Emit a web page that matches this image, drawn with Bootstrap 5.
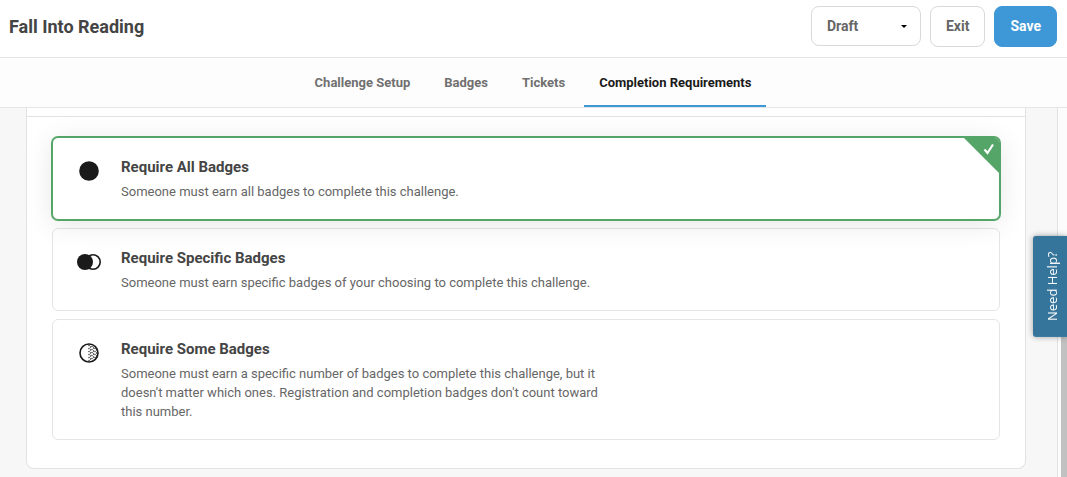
<!DOCTYPE html>
<html lang="en">
<head>
<meta charset="utf-8">
<meta name="viewport" content="width=device-width, initial-scale=1">
<title>Fall Into Reading</title>
<link href="https://cdn.jsdelivr.net/npm/bootstrap@5.3.0/dist/css/bootstrap.min.css" rel="stylesheet">
<style>
  body { font-family: Roboto, "Liberation Sans", sans-serif; font-size: 13px; line-height: 19px; color: #666; background: #f7f7f7; }
  .topbar { padding: 6px 10px 10px 9px; border-bottom: 1px solid #e5e5e5; }
  .topbar h1 { font-size: 18px; line-height: 24px; font-weight: 700; color: #444; }
  .controls { gap: 9px; }
  .ctl { font-size: 14px; line-height: 19px; font-weight: 700; padding: 10px 15px; border: 1px solid #d9d9d9; border-radius: 8px; color: #666; background-color: #fff; }
  .ctl-save { background-color: #3e97d6; border-color: #3e97d6; color: #fff; }
  .ctl-status { width: 110px; height: 40px; padding: 0 15px; background-image: url("data:image/svg+xml,%3csvg xmlns='http://www.w3.org/2000/svg' viewBox='0 0 6 3'%3e%3cpath d='M0 0h6L3 3z' fill='%23000'/%3e%3c/svg%3e"); background-size: 6px 3px; background-position: right 13px center; }
  .tabs { background: #fdfdfd; border-bottom: 1px solid #e5e5e5; gap: 4px; padding-right: 1px; }
  .tabs .nav-link { padding: 15px 15px 13px; border-bottom: 2px solid transparent; font-weight: 700; color: #707070; }
  .tabs .nav-link.active { color: #1a1a1a; border-color: #3e97d6; }
  .workspace { padding: 0 31px 8px 26px; }
  .panel { background: #fff; border: 1px solid #e2e2e2; border-top: 0; border-radius: 0 0 8px 8px; }
  .panel-head { height: 9px; border-bottom: 1px solid #e2e2e2; }
  .panel-options { padding: 20px 25px 28px; gap: 8px; }
  .option { gap: 20px; padding: 18px 24px; border: 1px solid #e5e5e5; border-radius: 6px; cursor: pointer; }
  .option.selected { z-index: 1; border-color: #55a468; box-shadow: 0 0 0 1px #55a468, 0 4px 28px rgba(0,0,0,.1); background: #fff; }
  .option-icon { width: 24px; height: 24px; margin-top: 3px; }
  .option-title { font-size: 15px; line-height: 22px; font-weight: 700; color: #444; margin-bottom: 4px; }
  .option-text { max-width: 480px; }
  .corner { width: 35px; height: 35px; }
  .track { width: 10px; padding-left: 3px; background: #fcfcfc; border-left: 1px solid #e2e2e2; }
  .thumb { height: 65%; background: #c1c1c1; }
  .help { top: 236px; width: 34px; height: 101px; writing-mode: vertical-rl; transform: rotate(180deg); z-index: 5; border: 0; border-radius: 0 3px 3px 0; background: #35749b; color: #fff; font-family: "Open Sans", sans-serif; font-size: 13px; line-height: 18px; padding: 0 4px 0 0; box-shadow: 0 0 6px rgba(0,0,0,.35); }
</style>
</head>
<body class="min-vh-100 d-flex flex-column">
<header class="topbar bg-white d-flex align-items-start gap-2">
  <h1 class="mb-0 me-auto align-self-center">Fall Into Reading</h1>
  <div class="controls d-flex align-items-start">
    <select class="form-select ctl ctl-status" aria-label="Status"><option>Draft</option><option>Published</option></select>
    <button type="button" class="ctl">Exit</button>
    <button type="button" class="ctl ctl-save">Save</button>
  </div>
</header>
<nav class="nav tabs justify-content-center" aria-label="Challenge">
  <a class="nav-link" href="#setup">Challenge Setup</a>
  <a class="nav-link" href="#badges">Badges</a>
  <a class="nav-link" href="#tickets">Tickets</a>
  <a class="nav-link active" href="#completion" aria-current="page">Completion Requirements</a>
</nav>
<div class="d-flex flex-grow-1">
  <main class="workspace flex-grow-1">
    <section class="panel">
      <div class="panel-head"></div>
      <form class="panel-options d-flex flex-column">
        <label class="option selected d-flex align-items-start position-relative">
          <input class="visually-hidden" type="radio" name="requirement" checked>
          <svg class="option-icon flex-shrink-0" viewBox="0 0 24 24" aria-hidden="true"><circle cx="12" cy="12" r="9.8" fill="#1a1a1a"/></svg>
          <span><span class="option-title d-block">Require All Badges</span><span class="option-text d-block">Someone must earn all badges to complete this challenge.</span></span>
          <svg class="corner position-absolute top-0 end-0" viewBox="0 0 35 35" aria-hidden="true"><path d="M0 0H30Q35 0 35 5V35Z" fill="#55a468"/><path d="M20.500 11.500l3 3.500 5.500-8.500" fill="none" stroke="#fff" stroke-width="2.200"/></svg>
        </label>
        <label class="option d-flex align-items-start">
          <input class="visually-hidden" type="radio" name="requirement">
          <svg class="option-icon flex-shrink-0" viewBox="0 0 24 24" aria-hidden="true"><circle cx="16" cy="12" r="7.2" fill="#fff" stroke="#1a1a1a" stroke-width="1.6"/><circle cx="8" cy="12" r="8" fill="#1a1a1a"/></svg>
          <span><span class="option-title d-block">Require Specific Badges</span><span class="option-text d-block">Someone must earn specific badges of your choosing to complete this challenge.</span></span>
        </label>
        <label class="option d-flex align-items-start">
          <input class="visually-hidden" type="radio" name="requirement">
          <svg class="option-icon flex-shrink-0" viewBox="0 0 24 24" aria-hidden="true">
            <g fill="none" stroke="#1a1a1a" stroke-width="1.3" stroke-linecap="round" stroke-dasharray="0 3"><path d="M12 4.500V20M15 5.500V19.500M18 7.500V18"/><path d="M13.500 6V19.500M16.500 7V18.500M19.500 9V16"/></g>
            <circle cx="12" cy="12" r="9" fill="none" stroke="#1a1a1a" stroke-width="1.6"/></svg>
          <span><span class="option-title d-block">Require Some Badges</span><span class="option-text d-block">Someone must earn a specific number of badges to complete this challenge, but it doesn't matter which ones. Registration and completion badges don't count toward this number.</span></span>
        </label>
      </form>
    </section>
  </main>
  <div class="track d-flex flex-column justify-content-end flex-shrink-0" aria-hidden="true"><div class="thumb"></div></div>
</div>
<button type="button" class="help position-fixed end-0">Need Help?</button>
<script src="https://cdn.jsdelivr.net/npm/bootstrap@5.3.0/dist/js/bootstrap.bundle.min.js"></script>
</body>
</html>
